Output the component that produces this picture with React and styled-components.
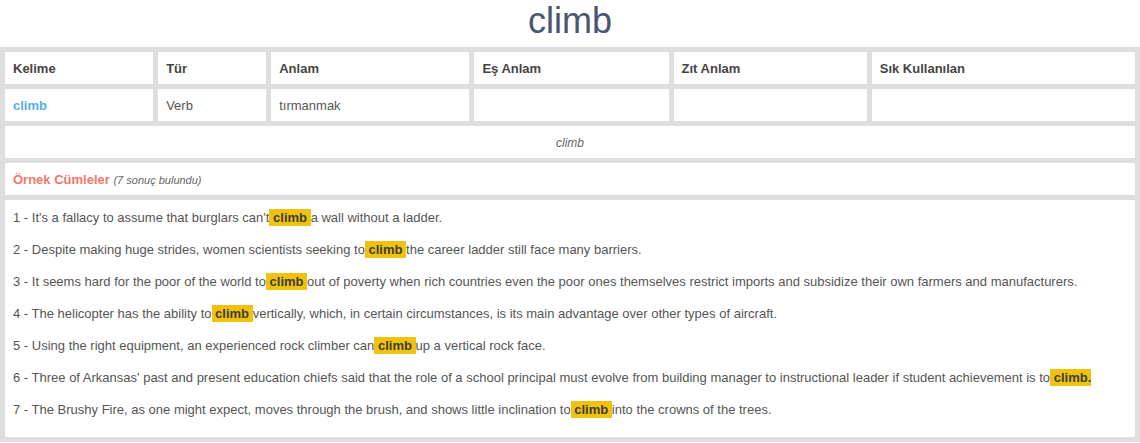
import React from "react";
import styled, { createGlobalStyle } from "styled-components";

const Global = createGlobalStyle`
  html, body { margin: 0; padding: 0; background: #fff; }
  body { font-family: "Liberation Sans", Arial, sans-serif; font-size: 13px; color: #555; }
`;

const Page = styled.div`
  width: 100%;
  overflow: hidden;
`;

const Title = styled.h1`
  margin: 0;
  height: 47px;
  line-height: 42px;
  text-align: center;
  font-family: "Liberation Sans", Arial, sans-serif;
  font-weight: normal;
  font-size: 36px;
  color: #4b5470;
`;

const Table = styled.table`
  width: 1140px;
  table-layout: fixed;
  border-collapse: separate;
  border-spacing: 5px;
  background: #dedede;
`;

const Cell = styled.td`
  background: #fff;
  height: 32px;
  padding: 0 8px;
  box-sizing: border-box;
  vertical-align: middle;
  color: ${(p) => (p.$head ? "#444" : "#555")};
  font-weight: ${(p) => (p.$head ? "bold" : "normal")};
  text-align: ${(p) => (p.$center ? "center" : "left")};
`;

const WordLink = styled.a`
  color: #5badea;
  font-weight: bold;
  text-decoration: none;
`;

const Italic = styled.span`
  font-style: italic;
  font-size: 12px;
  color: #666;
`;

const SectionTitle = styled.span`
  color: #f4776b;
  font-weight: bold;
`;

const Count = styled.span`
  font-style: italic;
  font-size: 11px;
  color: #666;
`;

const SentenceCell = styled.td`
  background: #fff;
  padding: 2px 8px 11px;
  vertical-align: top;
`;

const Sentence = styled.div`
  line-height: 32px;
  color: #555;
  white-space: nowrap;
`;

const Mark = styled.span`
  background: #f0c20c;
  color: #3d3d3d;
  font-weight: bold;
  padding: 1px 0;
  white-space: pre;
`;

const sentences = [
  ["It's a fallacy to assume that burglars can't", " climb ", "a wall without a ladder."],
  ["Despite making huge strides, women scientists seeking to", " climb ", "the career ladder still face many barriers."],
  ["It seems hard for the poor of the world to", " climb ", "out of poverty when rich countries even the poor ones themselves restrict imports and subsidize their own farmers and manufacturers."],
  ["The helicopter has the ability to", " climb ", "vertically, which, in certain circumstances, is its main advantage over other types of aircraft."],
  ["Using the right equipment, an experienced rock climber can", " climb ", "up a vertical rock face."],
  ["Three of Arkansas' past and present education chiefs said that the role of a school principal must evolve from building manager to instructional leader if student achievement is to", " climb.", ""],
  ["The Brushy Fire, as one might expect, moves through the brush, and shows little inclination to", " climb ", "into the crowns of the trees."],
];

const widths = [148, 108, 198, 194, 193, 263];

export default function App() {
  return (
    <Page>
      <Global />
      <Title>climb</Title>
      <Table>
        <colgroup>
          {widths.map((w, i) => (
            <col key={i} style={{ width: w }} />
          ))}
        </colgroup>
        <tbody>
          <tr>
            <Cell $head>Kelime</Cell>
            <Cell $head>Tür</Cell>
            <Cell $head>Anlam</Cell>
            <Cell $head>Eş Anlam</Cell>
            <Cell $head>Zıt Anlam</Cell>
            <Cell $head>Sık Kullanılan</Cell>
          </tr>
          <tr>
            <Cell><WordLink href="#">climb</WordLink></Cell>
            <Cell>Verb</Cell>
            <Cell>tırmanmak</Cell>
            <Cell></Cell>
            <Cell></Cell>
            <Cell></Cell>
          </tr>
          <tr>
            <Cell colSpan={6} $center><Italic>climb</Italic></Cell>
          </tr>
          <tr>
            <Cell colSpan={6}>
              <SectionTitle>Örnek Cümleler</SectionTitle> <Count>(7 sonuç bulundu)</Count>
            </Cell>
          </tr>
          <tr>
            <SentenceCell colSpan={6}>
              {sentences.map((s, i) => (
                <Sentence key={i}>
                  {i + 1} - {s[0]}<Mark>{s[1]}</Mark>{s[2]}
                </Sentence>
              ))}
            </SentenceCell>
          </tr>
        </tbody>
      </Table>
    </Page>
  );
}
